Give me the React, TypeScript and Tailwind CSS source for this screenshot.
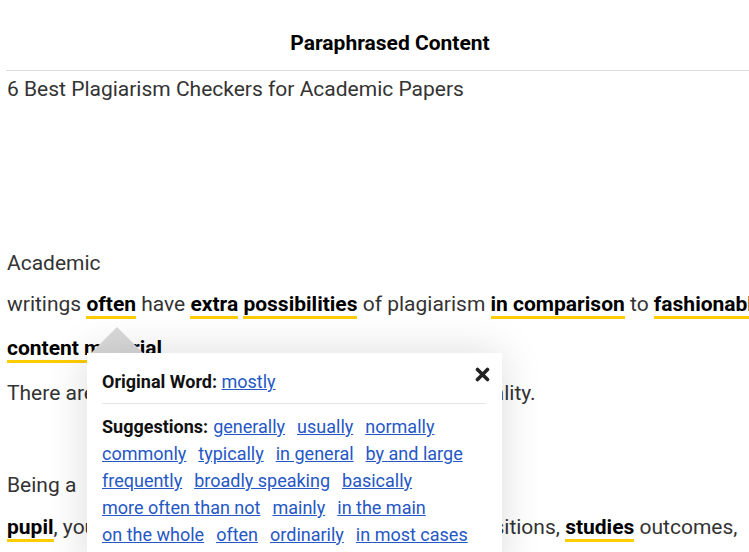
import React from 'react';

const suggestionRows: string[][] = [
  ['generally', 'usually', 'normally'],
  ['commonly', 'typically', 'in general', 'by and large'],
  ['frequently', 'broadly speaking', 'basically'],
  ['more often than not', 'mainly', 'in the main'],
  ['on the whole', 'often', 'ordinarily', 'in most cases'],
];

function Hl({ children }: { children: React.ReactNode }) {
  return <span className="font-bold text-black border-b-[3px] border-[#ffcc00]">{children}</span>;
}

function SynonymPopup() {
  return (
    <>
      {/* arrow */}
      <div className="absolute left-[85px] top-[327px] w-0 h-0 border-l-[26px] border-r-[26px] border-b-[26px] border-l-transparent border-r-transparent border-b-[#d9d9d9]" />
      <div className="absolute left-[81px] top-[353px] w-[415px] h-[220px] bg-white shadow-[0_0_40px_rgba(0,0,0,0.14)] pl-[15px] pr-[16px] pt-[18px] text-[18px] text-[#111]">
        <button className="absolute right-[12px] top-[14px] p-0 text-[#222]">
          <svg width="15" height="15" viewBox="0 0 15 15">
            <path d="M2.5 2.5 L12.5 12.5 M12.5 2.5 L2.5 12.5" stroke="currentColor" strokeWidth="3.6" strokeLinecap="round" />
          </svg>
        </button>
        <div className="leading-[22px] pb-[10px] border-b border-[#e6e6e6]">
          <span className="font-bold">Original Word:</span>{' '}
          <a href="#" className="text-[#2557c5] underline">mostly</a>
        </div>
        <div className="pt-[9px] leading-[27px]">
          {suggestionRows.map((row, i) => (
            <div key={i} className="flex whitespace-nowrap">
              {i === 0 && <span className="font-bold mr-[5px]">Suggestions:</span>}
              {row.map((w) => (
                <a key={w} href="#" className="text-[#2557c5] underline mr-[12px]">
                  {w}
                </a>
              ))}
            </div>
          ))}
        </div>
      </div>
    </>
  );
}

export default function App() {
  return (
    <div className="w-full h-[552px] overflow-hidden bg-white font-['Roboto',sans-serif]">
      <div className="relative w-[768px] ml-[6px]">
        <div className="pt-[31px] pb-[15px] text-center text-[21px] leading-[24px] font-bold text-black border-b border-[#dddddd]">
          Paraphrased Content
        </div>

        <div className="pl-[1px] text-[21px] text-[#333] whitespace-nowrap">
          <div className="leading-[36px]">6 Best Plagiarism Checkers for Academic Papers</div>
          <div className="h-[136px]" />
          <div className="leading-[41px]">Academic</div>
          <div className="leading-[41px]">
            writings <Hl>often</Hl> have <Hl>extra</Hl> <Hl>possibilities</Hl> of plagiarism <Hl>in comparison</Hl> to <Hl>fashionable</Hl>
          </div>
          <div className="leading-[47px]">
            <Hl>content material</Hl>
          </div>
          <div className="leading-[43px]">There are online tools to help you to check the originality.</div>
          <div className="h-[48px]" />
          <div className="leading-[44px]">Being a</div>
          <div className="leading-[40px]">
            <Hl>pupil</Hl>, you need to check your essays, theses, compositions, <Hl>studies</Hl> outcomes,
          </div>
        </div>

        <SynonymPopup />
      </div>
    </div>
  );
}
